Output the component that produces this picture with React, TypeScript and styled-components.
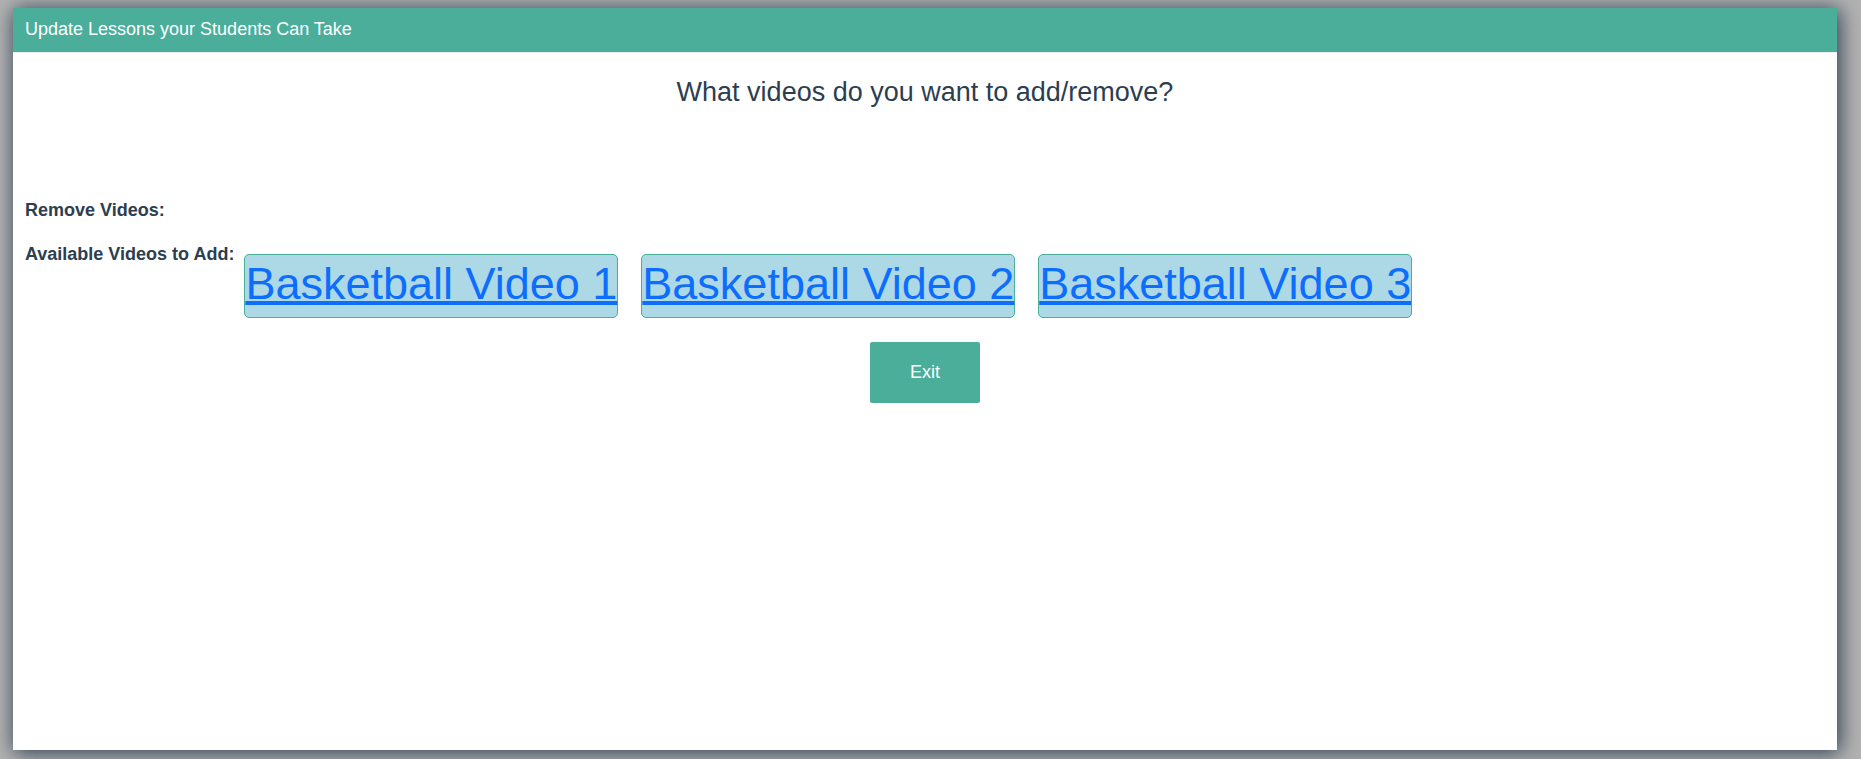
import React from 'react'
import styled, { createGlobalStyle } from 'styled-components'

const GlobalStyle = createGlobalStyle`
  html,
  body {
    margin: 0;
    padding: 0;
  }
  body {
    background: #b3b3b3;
    font-family: 'Liberation Sans', Arial, Helvetica, sans-serif;
    color: #2c3e50;
  }
`

const Backdrop = styled.div`
  box-sizing: border-box;
  min-height: 100vh;
  padding: 8px 24px 9px 13px;
  display: flex;
`

const Modal = styled.div`
  flex: 1;
  display: flex;
  flex-direction: column;
  background: #ffffff;
  box-shadow: 2px 2px 20px 1px #2c3e50;
`

const ModalHeader = styled.header`
  height: 42px;
  display: flex;
  align-items: center;
  padding: 0 12px 2px;
  background: #4aae9b;
  border-bottom: 1px solid #eeeeee;
  color: #ffffff;
  font-size: 18px;
`

const ModalBody = styled.section`
  padding: 0 12px;
  display: flex;
  flex-direction: column;
`

const Question = styled.h2`
  margin: 24px 0 0;
  font-size: 27px;
  font-weight: normal;
  line-height: normal;
  text-align: center;
`

const SectionLabel = styled.div<{ $top: number }>`
  margin-top: ${({ $top }) => $top}px;
  font-size: 18px;
  font-weight: bold;
  line-height: normal;
  white-space: nowrap;
`

const VideoRow = styled.div`
  display: flex;
  align-items: flex-start;
  gap: 10px;
  margin-top: 23px;
`

const VideoList = styled.div`
  display: flex;
  gap: 23px;
  margin-top: 10px;
`

const VideoCard = styled.div`
  padding: 3px 0 7px;
  background: #add8e6;
  border: 1px solid #4aae9b;
  border-radius: 5px;
`

const VideoLink = styled.a`
  display: block;
  font-size: 45px;
  line-height: normal;
  color: #0d6efd;
  text-decoration: underline;
  text-decoration-thickness: 4px;
  white-space: nowrap;
  cursor: pointer;
`

const ExitButton = styled.button`
  align-self: center;
  width: 110px;
  height: 61px;
  margin-top: 24px;
  border: none;
  border-radius: 2px;
  background: #4aae9b;
  color: #ffffff;
  font-family: inherit;
  font-size: 18px;
  cursor: pointer;
`

const videos = ['Basketball Video 1', 'Basketball Video 2', 'Basketball Video 3']

export default function App() {
  return (
    <>
      <GlobalStyle />
      <Backdrop>
        <Modal>
          <ModalHeader>Update Lessons your Students Can Take</ModalHeader>
          <ModalBody>
            <Question>What videos do you want to add/remove?</Question>
            <SectionLabel $top={92}>Remove Videos:</SectionLabel>
            <VideoRow>
              <SectionLabel $top={0}>Available Videos to Add:</SectionLabel>
              <VideoList>
                {videos.map((v) => (
                  <VideoCard key={v}>
                    <VideoLink>{v}</VideoLink>
                  </VideoCard>
                ))}
              </VideoList>
            </VideoRow>
            <ExitButton>Exit</ExitButton>
          </ModalBody>
        </Modal>
      </Backdrop>
    </>
  )
}
